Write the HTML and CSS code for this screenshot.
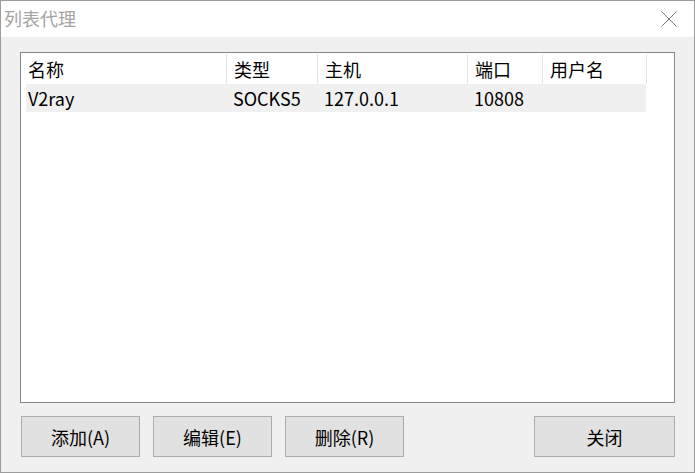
FILE: index.html
```html
<!DOCTYPE html>
<html lang="zh-CN">
<head>
<meta charset="utf-8">
<title>列表代理</title>
<link rel="stylesheet" href="styles.css">
</head>
<body>
<div class="window">
  <div class="titlebar">
    <span class="title">列表代理</span>
    <svg class="close" width="16" height="16" viewBox="0 0 16 16">
      <path d="M0.5 0.5 L15.5 15.5 M15.5 0.5 L0.5 15.5" stroke="#7a7a7a" stroke-width="1" fill="none"/>
    </svg>
  </div>
  <div class="content">
    <div class="listbox">
      <div class="header">
        <div class="hcell">名称</div>
        <div class="hcell">类型</div>
        <div class="hcell">主机</div>
        <div class="hcell">端口</div>
        <div class="hcell">用户名</div>
      </div>
      <div class="row">
        <div class="cell first">V2ray</div>
        <div class="cell">SOCKS5</div>
        <div class="cell">127.0.0.1</div>
        <div class="cell">10808</div>
        <div class="cell"></div>
      </div>
    </div>
    <div class="buttons">
      <button class="btn">添加(A)</button>
      <button class="btn">编辑(E)</button>
      <button class="btn">删除(R)</button>
      <span class="spacer"></span>
      <button class="btn wide">关闭</button>
    </div>
  </div>
</div>
</body>
</html>
```

FILE: styles.css
```css
* { box-sizing: border-box; }
html, body {
  margin: 0;
  padding: 0;
  background: #f0f0f0;
}
body {
  width: 695px;
  height: 473px;
  overflow: hidden;
  font-family: "Noto Sans CJK SC", "Noto Sans", sans-serif;
  font-size: 18px;
  color: #000;
}
.window {
  width: 695px;
  height: 473px;
  border: 1px solid #9c9c9c;
  background: #f0f0f0;
  display: flex;
  flex-direction: column;
}
.titlebar {
  height: 36px;
  background: #fff;
  display: flex;
  align-items: center;
  justify-content: space-between;
  padding: 0 17px 0 3px;
  flex: none;
}
.title {
  color: #a3a3a3;
  font-size: 18px;
  line-height: 20px;
  margin-top: -2px;
}
.close {
  display: block;
  margin-top: -1px;
}
.content {
  flex: 1;
  padding: 15px 19px 0 19px;
  display: flex;
  flex-direction: column;
}
.listbox {
  width: 655px;
  height: 351px;
  border: 1px solid #828790;
  background: #fff;
  flex: none;
}
.header {
  display: grid;
  grid-template-columns: 206px 91px 150px 75px 104px;
  height: 31px;
}
.hcell {
  border-right: 1px solid #e5e5e5;
  padding-left: 7px;
  line-height: 30px;
  height: 30px;
  margin-top: 1px;
  white-space: nowrap;
}
.row {
  display: grid;
  grid-template-columns: 200px 91px 150px 75px 104px;
  margin-left: 5px;
  width: 620px;
  height: 28px;
  background: #f0f0f0;
}
.cell {
  padding-left: 7px;
  line-height: 28px;
  white-space: nowrap;
}
.cell.first { padding-left: 2px; }
.buttons {
  display: flex;
  gap: 13px;
  margin-top: 13px;
  padding-left: 1px;
}
.btn {
  width: 119px;
  height: 41px;
  background: #e1e1e1;
  border: 1px solid #adadad;
  font-family: "Noto Sans CJK SC", "Noto Sans", sans-serif;
  font-size: 18px;
  color: #000;
  padding: 0;
  line-height: 38px;
}
.spacer { flex: 1; }
.btn.wide { width: 141px; margin-right: 0; }
```
